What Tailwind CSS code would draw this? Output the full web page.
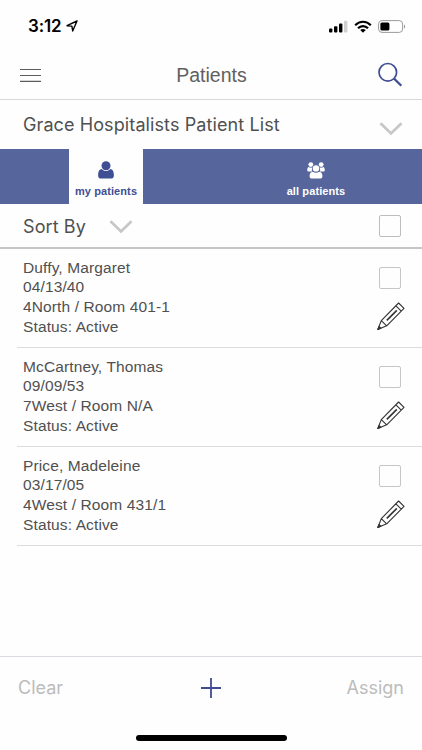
<!DOCTYPE html>
<html lang="en">
<head>
    <meta charset="UTF-8">
    <meta name="viewport" content="width=device-width, initial-scale=1.0">
    <title>Patients</title>
    <script src="https://cdn.jsdelivr.net/npm/@tailwindcss/browser@4"></script>
</head>
<body class="bg-[#fefefe] text-[#505050] font-['Liberation_Sans',sans-serif]">
    <div class="relative flex h-[750px] w-[422px] flex-col overflow-hidden">

        <!-- status bar -->
        <div class="flex h-[50px] shrink-0 items-center justify-between pt-[2px] pr-[16px] pl-[28px] text-black">
            <div class="flex items-center gap-[4px]">
                <span class="font-['Inter',sans-serif] text-[17px] font-semibold leading-5 tracking-[-0.1px]">3:12</span>
                <svg class="h-[12px] w-[12px]" viewBox="0 0 12 12" fill="none" stroke="currentColor" stroke-width="1.4" stroke-linejoin="round"><path d="M11 1L1 5.7L5.9 6.1L6.7 11Z" /></svg>
            </div>
            <div class="flex items-center gap-[6px]">
                <svg class="h-[13px] w-[20px]" viewBox="0 0 20 13" fill="currentColor">
                    <rect x="1" y="8.5" width="3.4" height="4" rx="1" />
                    <rect x="6" y="6.3" width="3.4" height="6.2" rx="1" />
                    <rect x="11" y="3.5" width="3.4" height="9" rx="1" />
                    <rect x="16" y="0.8" width="3.4" height="11.7" rx="1" fill="#d0d0d0" />
                </svg>
                <svg class="h-[13px] w-[18px]" viewBox="0 0 18 13" fill="none" stroke="currentColor" stroke-width="2.2">
                    <path d="M1.2 5.2C5.6 0.6 12.4 0.6 16.8 5.2" />
                    <path d="M4 8.2C6.8 5.3 11.2 5.3 14 8.2" />
                    <path d="M6.2 10C7.8 8.6 10.2 8.6 11.8 10L9 12.8Z" fill="currentColor" stroke="none" />
                </svg>
                <svg class="h-[13px] w-[28px]" viewBox="0 0 28 13">
                    <rect x="0.6" y="0.6" width="24" height="11.8" rx="3.4" fill="none" stroke="#9b9b9b" />
                    <rect x="2.4" y="2.4" width="9" height="8.2" rx="1.6" fill="#000" />
                    <path d="M26 4.4C27.6 5 27.6 8 26 8.6Z" fill="#9b9b9b" />
                </svg>
            </div>
        </div>

        <!-- title bar -->
        <header class="flex h-[50px] shrink-0 items-center justify-between border-b border-[#d9d9d9] pr-[19px] pl-[20px]">
            <svg class="h-[14px] w-[26px]" viewBox="0 0 26 14" stroke="#5c5c5c" stroke-width="1.1"><path d="M0 1.5H21M0 7.5H21M0 13.4H21" /></svg>
            <h1 class="text-[19.5px] leading-6 text-[#606060]">Patients</h1>
            <svg class="h-[26px] w-[26px]" viewBox="0 0 26 26" fill="none" stroke="#3f4c93"><circle cx="10.8" cy="10.3" r="8.8" stroke-width="1.7" /><path d="M17 16.5L24.3 23.8" stroke-width="2.3" /></svg>
        </header>

        <!-- list picker -->
        <div class="flex h-[49px] shrink-0 items-center justify-between pr-[19px] pl-[23px]">
            <span class="font-['Inter',sans-serif] text-[18px] leading-6 tracking-[0.1px]">Grace Hospitalists Patient List</span>
            <svg class="mt-[8px] h-[14px] w-[24px]" viewBox="0 0 24 14" fill="none" stroke="#c7c7c7" stroke-width="2.8"><path d="M1.5 1.2L12 11.4L22.5 1.2" /></svg>
        </div>

        <!-- tabs -->
        <nav class="flex h-[55px] shrink-0 bg-[#57659d] text-center text-[11px] font-bold leading-[13px] tracking-[0.1px]">
            <button class="ml-[69px] flex w-[74px] flex-col items-center bg-[#fefefe] pt-[12px] text-[#3f4f93]">
                <svg class="h-[18px] w-[16px]" viewBox="0 0 16 18" fill="currentColor"><circle cx="8" cy="4.7" r="4.5" /><path d="M3.8 8C1.2 8.3 0.1 10.5 0.1 14.5C0.1 16.5 1.2 17.6 3 17.6H13C14.8 17.6 15.9 16.5 15.9 14.5C15.9 10.5 14.8 8.3 12.2 8C9.7 10.8 6.3 10.8 3.8 8Z" /></svg>
                <span class="mt-[6px] whitespace-nowrap">my patients</span>
            </button>
            <button class="ml-[136px] flex w-[74px] flex-col items-center pt-[13px] text-white">
                <svg class="h-[17px] w-[18px]" viewBox="0 0 18 17" fill="currentColor">
                    <circle cx="3.8" cy="2.6" r="2.4" /><circle cx="14.2" cy="2.6" r="2.4" />
                    <path d="M1.6 5C0.5 5.2 0.2 6.8 0.3 8.4C0.4 9.2 1 9.6 1.8 9.6H5C4.7 8.4 4.8 6.9 5.4 5.6C4.2 5.9 2.5 5.8 1.6 5ZM16.4 5C17.5 5.2 17.8 6.8 17.7 8.4C17.6 9.2 17 9.6 16.2 9.6H13C13.3 8.4 13.2 6.9 12.6 5.6C13.8 5.9 15.5 5.8 16.4 5Z" />
                    <circle cx="9" cy="6.4" r="3.2" />
                    <path d="M5.6 9.7C3.4 9.9 2.6 11.8 2.6 14.3C2.6 15.8 3.5 16.6 4.8 16.6H13.2C14.5 16.6 15.4 15.8 15.4 14.3C15.4 11.8 14.6 9.9 12.4 9.7C10.4 11 7.6 11 5.6 9.7Z" />
                </svg>
                <span class="mt-[6px] whitespace-nowrap">all patients</span>
            </button>
        </nav>

        <!-- sort row -->
        <div class="flex h-[45px] shrink-0 items-center border-b-2 border-[#c6c6c6] pt-[2px] pr-[21px] pl-[23px]">
            <span class="font-['Inter',sans-serif] text-[18px] leading-6 tracking-[0.1px]">Sort By</span>
            <svg class="ml-[23px] h-[14px] w-[24px]" viewBox="0 0 24 14" fill="none" stroke="#c7c7c7" stroke-width="2.8"><path d="M1.5 1.2L12 11.4L22.5 1.2" /></svg>
            <span class="-mt-px ml-auto h-[22px] w-[22px] rounded-[2px] border border-[#bdbdbd]"></span>
        </div>

        <!-- patients -->
        <ul class="shrink-0 pl-[17px] text-[15.5px] tracking-[0.12px]">
            <li class="flex h-[99px] justify-between border-b border-[#dcdcdc] pr-[17px] pl-[6px]">
                <div class="pt-[9px] leading-[20px]">
                    <p class="h-[19px]">Duffy, Margaret</p>
                    <p>04/13/40</p>
                    <p>4North / Room 401-1</p>
                    <p>Status: Active</p>
                </div>
                <div class="flex w-[28px] flex-col items-center pt-[18px]">
                    <span class="h-[22px] w-[22px] -translate-x-px rounded-[2px] border border-[#c6c6c6]"></span>
                    <svg class="mt-[13px] h-[29px] w-[28px]" viewBox="0 0 28 29" fill="none" stroke="#333" stroke-width="1.1" stroke-linejoin="round"><path d="M0.8 27.5L4.3 18.6L21.6 1L27 6.4L9.7 23.8ZM4.3 18.6L9.7 23.8M18.9 3.8L24.3 9.2" /><path d="M9.8 18.4L19.8 8.4" stroke-width="1.6" /><path d="M0.8 27.5L2 24.5L3.9 26.2Z" fill="#333" /></svg>
                </div>
            </li>
            <li class="flex h-[99px] justify-between border-b border-[#dcdcdc] pr-[17px] pl-[6px]">
                <div class="pt-[9px] leading-[20px]">
                    <p class="h-[19px]">McCartney, Thomas</p>
                    <p>09/09/53</p>
                    <p>7West / Room N/A</p>
                    <p>Status: Active</p>
                </div>
                <div class="flex w-[28px] flex-col items-center pt-[18px]">
                    <span class="h-[22px] w-[22px] -translate-x-px rounded-[2px] border border-[#c6c6c6]"></span>
                    <svg class="mt-[13px] h-[29px] w-[28px]" viewBox="0 0 28 29" fill="none" stroke="#333" stroke-width="1.1" stroke-linejoin="round"><path d="M0.8 27.5L4.3 18.6L21.6 1L27 6.4L9.7 23.8ZM4.3 18.6L9.7 23.8M18.9 3.8L24.3 9.2" /><path d="M9.8 18.4L19.8 8.4" stroke-width="1.6" /><path d="M0.8 27.5L2 24.5L3.9 26.2Z" fill="#333" /></svg>
                </div>
            </li>
            <li class="flex h-[99px] justify-between border-b border-[#dcdcdc] pr-[17px] pl-[6px]">
                <div class="pt-[9px] leading-[20px]">
                    <p class="h-[19px]">Price, Madeleine</p>
                    <p>03/17/05</p>
                    <p>4West / Room 431/1</p>
                    <p>Status: Active</p>
                </div>
                <div class="flex w-[28px] flex-col items-center pt-[18px]">
                    <span class="h-[22px] w-[22px] -translate-x-px rounded-[2px] border border-[#c6c6c6]"></span>
                    <svg class="mt-[13px] h-[29px] w-[28px]" viewBox="0 0 28 29" fill="none" stroke="#333" stroke-width="1.1" stroke-linejoin="round"><path d="M0.8 27.5L4.3 18.6L21.6 1L27 6.4L9.7 23.8ZM4.3 18.6L9.7 23.8M18.9 3.8L24.3 9.2" /><path d="M9.8 18.4L19.8 8.4" stroke-width="1.6" /><path d="M0.8 27.5L2 24.5L3.9 26.2Z" fill="#333" /></svg>
                </div>
            </li>
        </ul>

        <!-- actions -->
        <footer class="mt-auto h-[94px] shrink-0 border-t border-[#d9dbe0] px-[18px]">
            <div class="grid h-[61px] grid-cols-3 items-center font-['Inter',sans-serif] text-[18px] text-[#bcbcbc]">
                <span>Clear</span>
                <svg class="h-[20px] w-[20px] justify-self-center" viewBox="0 0 20 20" stroke="#3f4c93" stroke-width="1.8"><path d="M10 0V20M0 10H20" /></svg>
                <span class="justify-self-end">Assign</span>
            </div>
            <div class="mx-auto mt-[17px] h-[6px] w-[151px] rounded-full bg-black"></div>
        </footer>
    </div>
</body>
</html>
